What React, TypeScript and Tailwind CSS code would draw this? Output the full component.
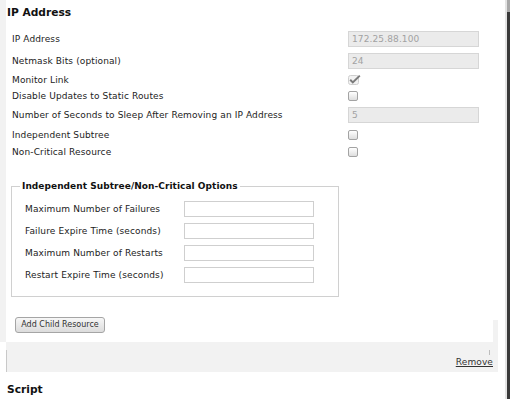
const topFields = [
  { label: "IP Address", kind: "input", value: "172.25.88.100", h: "h-[22px]" },
  { label: "Netmask Bits (optional)", kind: "input", value: "24", h: "h-[22px]" },
  { label: "Monitor Link", kind: "checked", h: "h-[16px]" },
  { label: "Disable Updates to Static Routes", kind: "box", h: "h-[16px]" },
  { label: "Number of Seconds to Sleep After Removing an IP Address", kind: "input", value: "5", h: "h-[22px]" },
  { label: "Independent Subtree", kind: "box", h: "h-[17px]" },
  { label: "Non-Critical Resource", kind: "box", h: "h-[17px]" },
];

const subtreeFields = [
  "Maximum Number of Failures",
  "Failure Expire Time (seconds)",
  "Maximum Number of Restarts",
  "Restart Expire Time (seconds)",
];

function Checkbox() {
  return (
    <span className="block w-[10px] h-[10px] rounded-[2px] border border-[#a3a3a3] bg-gradient-to-b from-white to-[#dedede]" />
  );
}

function CheckedBox() {
  return (
    <svg width="13" height="11" viewBox="0 0 13 11" className="block -mt-[1px]">
      <rect x="0.5" y="1.5" width="10" height="9" rx="2" fill="#f2f2f2" stroke="#cfcfcf" />
      <path d="M2.2 5.8 L4.8 8.4 L11.8 1.6" fill="none" stroke="#7a7a7a" strokeWidth="2" />
    </svg>
  );
}

export default function App() {
  return (
    <div className="relative w-[510px] h-[399px] overflow-hidden bg-white font-['DejaVu_Sans',sans-serif] text-[#222]">
      {/* scrollbar */}
      <div className="absolute right-0 top-0 bottom-0 w-[5px] flex">
        <div className="w-[2px] bg-[#e4e4e4]" />
        <div className="flex-1 flex flex-col">
          <div className="h-[12px] bg-[#a8a8a8]" />
          <div className="flex-1 bg-[#3a3a3a]" />
        </div>
      </div>

      <div className="w-[505px]">
        {/* resource panel */}
        <div className="relative flex h-[342px]">
          <div className="w-[6px] bg-[#f2f2f2]" />
          <div className="flex-1 flex flex-col">
            <h2 className="pt-[5px] pl-[1px] text-[10.67px] leading-[16px] font-bold text-[#111]">IP Address</h2>

            <div className="mt-[7px] flex flex-col pl-[6px]">
              {topFields.map((f) => (
                <div key={f.label} className={`grid grid-cols-[336px_131px] items-center ${f.h}`}>
                  <span className="text-[9px] leading-[12px] tracking-[0.12px]">{f.label}</span>
                  {f.kind === "input" && (
                    <div className="h-[16px] border border-[#d6d6d6] bg-[#ebebeb] pl-[3px] text-[9px] leading-[14px] tracking-[0.12px] text-[#a2a2a2]">
                      {f.value}
                    </div>
                  )}
                  {f.kind === "checked" && <CheckedBox />}
                  {f.kind === "box" && <Checkbox />}
                </div>
              ))}
            </div>

            <fieldset className="mt-[20px] ml-[5px] w-[328px] border border-[#d0d0d0] pl-[13px] pt-[6px] pb-[10px]">
              <legend className="-ml-[5px] px-[2px] text-[9px] leading-[12px] font-bold text-[#111] tracking-[0.05px]">
                Independent Subtree/Non-Critical Options
              </legend>
              {subtreeFields.map((label) => (
                <div key={label} className="grid grid-cols-[159px_130px] items-center h-[22px]">
                  <span className="text-[9px] leading-[12px] tracking-[0.12px]">{label}</span>
                  <div className="h-[16px] border border-[#cfcfcf] bg-white" />
                </div>
              ))}
            </fieldset>

            <div className="mt-[20px] ml-[9px] flex">
              <button className="h-[16px] w-[90px] rounded-[3px] border border-[#a5a5a5] bg-gradient-to-b from-[#f7f7f7] to-[#dcdcdc] text-[8px] leading-[14px] text-[#333]">
                Add Child Resource
              </button>
            </div>
          </div>
          <div className="absolute right-[7px] bottom-0 w-[5px] h-[22px] bg-[#f2f2f2]" />
        </div>

        {/* remove bar */}
        <div className="relative ml-[6px] w-[492px] h-[30px] bg-[#f2f2f2] flex justify-end pr-[5px] pt-[14px]">
          <div className="absolute left-0 top-[8px] bottom-0 w-px bg-[#c9c9c9]" />
          <div className="absolute left-[483px] top-[8px] h-[5px] w-px bg-[#bdbdbd]" />
          <a className="text-[9px] leading-[12px] tracking-[0.12px] text-[#333] underline">Remove</a>
        </div>

        <h2 className="mt-[10px] pl-[7px] text-[10.67px] leading-[16px] font-bold text-[#111]">Script</h2>
      </div>
    </div>
  );
}
